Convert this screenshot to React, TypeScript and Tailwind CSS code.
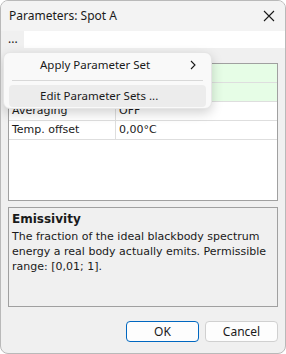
import React from "react";

const ui = { fontFamily: '"Segoe UI", "Noto Sans", "Open Sans", sans-serif' };
const tah = { fontFamily: 'Tahoma, "DejaVu Sans", "Liberation Sans", sans-serif' };

function Row({ label, value, green }: { label: string; value: string; green?: boolean }) {
  return (
    <div className={`flex h-[19px] border-b border-[#dedede] ${green ? "bg-[#e6fde6]" : "bg-white"}`}>
      <div className="w-[107px] border-r border-[#dedede] pl-[3px] leading-[18px]">{label}</div>
      <div className="flex-1 pl-[3px] leading-[18px]">{value}</div>
    </div>
  );
}

export default function App() {
  return (
    <div className="w-[286px] h-[354px] bg-white">
      <div className="relative w-[286px] h-[354px] rounded-[8px] border border-[#b9b9b9] bg-[#f0f0f0] overflow-hidden flex flex-col text-[#1a1a1a]">
        <div className="h-[30px] bg-[#f3f3f3] flex items-center justify-between pl-[8px] pr-[9px] text-[12px]" style={ui}>
          <span>Parameters: Spot A</span>
          <svg width="12" height="12" viewBox="0 0 12 12" className="mr-[1px]">
            <path d="M1 1 L11 11 M11 1 L1 11" stroke="#1a1a1a" strokeWidth="1.1" />
          </svg>
        </div>
        <div className="h-[17px] bg-white flex text-[12px]" style={ui}>
          <div className="w-[23px] bg-[#f0f0f0] pl-[7px] leading-[16px]">...</div>
        </div>
        <div className="flex-1 flex flex-col px-[7px] pt-[15px] pb-[11px] text-[11px]" style={tah}>
          <div className="h-[138px] border border-[#a0a0a0] bg-white flex flex-col">
            <Row label="" value="" green />
            <Row label="" value="" green />
            <Row label="Averaging" value="OFF" />
            <Row label="Temp. offset" value="0,00°C" />
          </div>
          <div className="mt-[6px] h-[100px] border border-[#a0a0a0] px-[3px] pt-[3px]">
            <div className="font-bold text-[12px] leading-[16px]">Emissivity</div>
            <div className="leading-[15px] mt-[2px]">
              The fraction of the ideal blackbody spectrum energy a real body actually emits. Permissible range: [0,01; 1].
            </div>
          </div>
          <div className="mt-auto flex justify-end gap-[6px] text-[12px]" style={ui}>
            <button className="w-[73px] h-[21px] rounded-[4px] border border-[#0067c0] bg-[#fdfdfd] leading-[19px]">OK</button>
            <button className="w-[73px] h-[21px] rounded-[4px] border border-[#d0d0d0] bg-[#fdfdfd] leading-[19px]">Cancel</button>
          </div>
        </div>
        <div
          className="absolute left-[2px] top-[51px] w-[209px] h-[57px] rounded-[7px] bg-[#f9f9f9] border border-[#e5e5e5] shadow-[0_4px_12px_rgba(0,0,0,0.18)] text-[11.5px] px-[5px] pt-[1px]"
          style={ui}
        >
          <div className="h-[21px] flex items-center justify-between pl-[31px] pr-[10px]">
            <span>Apply Parameter Set</span>
            <svg width="6" height="10" viewBox="0 0 6 10">
              <path d="M1 1 L5 5 L1 9" fill="none" stroke="#1a1a1a" strokeWidth="1.1" />
            </svg>
          </div>
          <div className="mx-[3px] mt-[5px] h-px bg-[#d8d8d8]" />
          <div className="h-[22px] mt-[4px] rounded-[4px] bg-[#ececec] flex items-center pl-[31px]">Edit Parameter Sets ...</div>
        </div>
      </div>
    </div>
  );
}
